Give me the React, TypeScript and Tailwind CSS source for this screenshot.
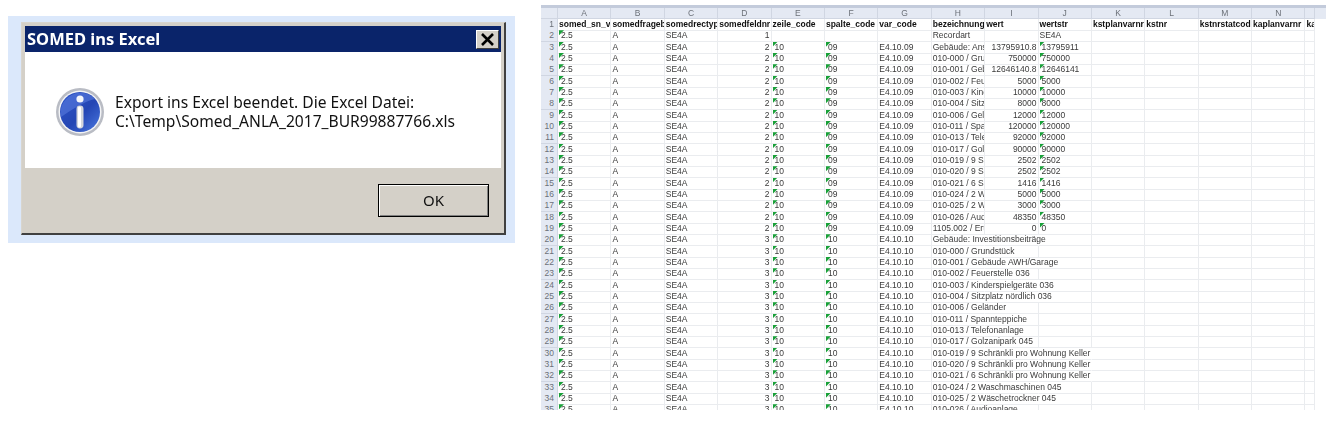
const cols = ["A", "B", "C", "D", "E", "F", "G", "H", "I", "J", "K", "L", "M", "N", ""];

const headers = [
  "somed_sn_version",
  "somedfrageb",
  "somedrectype",
  "somedfeldnr",
  "zeile_code",
  "spalte_code",
  "var_code",
  "bezeichnung",
  "wert",
  "wertstr",
  "kstplanvarnr",
  "kstnr",
  "kstnrstatcode",
  "kaplanvarnr",
  "kaplan",
];

const block1: [string, string][] = [
  ["Gebäude: Anschaffung", "13795910.8"],
  ["010-000 / Grundstück", "750000"],
  ["010-001 / Gebäude", "12646140.8"],
  ["010-002 / Feuerstelle", "5000"],
  ["010-003 / Kinderspiel", "10000"],
  ["010-004 / Sitzplatz", "8000"],
  ["010-006 / Geländer", "12000"],
  ["010-011 / Spannteppiche", "120000"],
  ["010-013 / Telefon", "92000"],
  ["010-017 / Golzanipark", "90000"],
  ["010-019 / 9 Schränkli", "2502"],
  ["010-020 / 9 Schränkli", "2502"],
  ["010-021 / 6 Schränkli", "1416"],
  ["010-024 / 2 Waschmaschinen", "5000"],
  ["010-025 / 2 Wäschetrockner", "3000"],
  ["010-026 / Audioanlage", "48350"],
  ["1105.002 / Ertrag", "0"],
];

const block2 = [
  "Gebäude: Investitionsbeiträge",
  "010-000 / Grundstück",
  "010-001 / Gebäude AWH/Garage",
  "010-002 / Feuerstelle 036",
  "010-003 / Kinderspielgeräte 036",
  "010-004 / Sitzplatz nördlich 036",
  "010-006 / Geländer",
  "010-011 / Spannteppiche",
  "010-013 / Telefonanlage",
  "010-017 / Golzanipark 045",
  "010-019 / 9 Schränkli pro Wohnung Keller",
  "010-020 / 9 Schränkli pro Wohnung Keller",
  "010-021 / 6 Schränkli pro Wohnung Keller",
  "010-024 / 2 Waschmaschinen 045",
  "010-025 / 2 Wäschetrockner 045",
  "010-026 / Audioanlage",
];

function InfoIcon() {
  return (
    <svg width="50" height="50" viewBox="0 0 50 50" className="shrink-0">
      <defs>
        <linearGradient id="infoBlue" x1="0" y1="0" x2="1" y2="1">
          <stop offset="0" stopColor="#2f55c8" />
          <stop offset="0.55" stopColor="#2446b4" />
          <stop offset="1" stopColor="#4a78e0" />
        </linearGradient>
      </defs>
      <circle cx="25" cy="25" r="24" fill="#b9bcc4" />
      <circle cx="25" cy="25" r="21.5" fill="#f2f3f5" />
      <circle cx="25" cy="25" r="20" fill="url(#infoBlue)" />
      <path d="M6 30 A20 20 0 0 1 40 12 C30 14 18 22 6 30Z" fill="#5c7fe0" opacity="0.55" />
      <circle cx="25" cy="12" r="3.6" fill="#f4f6fb" />
      <rect x="21.5" y="18.5" width="7" height="23" rx="3.4" fill="#d3d6dc" />
      <rect x="23" y="19.5" width="3" height="21" rx="1.5" fill="#ffffff" />
    </svg>
  );
}

function Dialog() {
  return (
    <div className="w-[507px] h-[227px] bg-[#dbe8fb] pt-[6px] pl-[13px]">
      <div className="w-[485px] h-[213px] flex flex-col bg-[#d4d0c8] border-t-[1px] border-l-[1px] border-t-[#d8d5ce] border-l-[#d8d5ce] border-r-[2px] border-b-[2px] border-r-[#404040] border-b-[#404040] p-[3px] blur-[0.4px] font-['Noto_Sans',sans-serif]">
        <div className="h-[26px] shrink-0 bg-[#0a246a] flex items-center justify-between pl-[2px] pr-[2px]">
          <span className="text-white font-bold text-[16.5px] leading-none">SOMED ins Excel</span>
          <button className="w-[23px] h-[19px] flex items-center justify-center bg-[#d4d0c8] border border-t-white border-l-white border-r-[#404040] border-b-[#404040]">
            <svg width="15" height="13" viewBox="0 0 15 13">
              <path d="M2 1 L13 12 M13 1 L2 12" stroke="#000" strokeWidth="2.6" fill="none" />
            </svg>
          </button>
        </div>
        <div className="h-[116px] shrink-0 bg-white flex items-center pl-[30px] pt-[3px] gap-[10px]">
          <InfoIcon />
          <p className="text-[15.6px] leading-[19px] text-[#111] whitespace-nowrap">
            Export ins Excel beendet. Die Excel Datei:
            <br />
            C:\Temp\Somed_ANLA_2017_BUR99887766.xls
          </p>
        </div>
        <div className="flex-1 flex justify-end pt-[16px] pr-[12px]">
          <button className="w-[111px] h-[33px] bg-[#d4d0c8] border border-black text-[15px] text-[#111] shadow-[inset_1px_1px_0_#fff,inset_-1px_-1px_0_#808080]">
            OK
          </button>
        </div>
      </div>
    </div>
  );
}

function Flag() {
  return (
    <span className="absolute left-[1px] top-0 w-[5px] h-[5px] bg-[#18a038] [clip-path:polygon(0_0,100%_0,0_100%)]" />
  );
}

function Cell({
  children,
  flag,
  right,
  clip,
  open,
}: {
  children?: React.ReactNode;
  flag?: boolean;
  right?: boolean;
  clip?: boolean;
  open?: boolean;
}) {
  return (
    <div
      className={`relative h-full border-r border-b border-[#eaecef] px-[1px] whitespace-nowrap ${
        right ? "text-right" : ""
      } ${clip ? "overflow-hidden" : ""} ${open ? "border-r-transparent" : ""}`}
    >
      {flag && <Flag />}
      {children}
    </div>
  );
}

function Row({ n, children }: { n: number; children: React.ReactNode }) {
  return (
    <div className="grid grid-cols-[17px_repeat(14,53.4px)_10px] h-[11.34px] leading-[11px]">
      <div className="h-full bg-[#e4e9f3] border-r border-b border-[#d0d6e2] text-right pr-[3px] text-[#6b7078]">
        {n}
      </div>
      {children}
    </div>
  );
}

function Sheet() {
  const rows: React.ReactNode[] = [];

  for (let n = 2; n <= 35; n++) {
    const first = block1[n - 3];
    const second = block2[n - 20];
    const code = n <= 19 ? "09" : "10";
    const hasCode = n > 2;
    const d = n === 2 ? "1" : n <= 19 ? "2" : "3";
    const len = second ? second.length : 0;

    rows.push(
      <Row key={n} n={n}>
        <Cell flag>
          <span className="pl-[2px]">2.5</span>
        </Cell>
        <Cell>A</Cell>
        <Cell>SE4A</Cell>
        <Cell right>{d}</Cell>
        <Cell flag={hasCode}>{hasCode ? <span className="pl-[2px]">10</span> : null}</Cell>
        <Cell flag={hasCode}>{hasCode ? <span className="pl-[2px]">{code}</span> : null}</Cell>
        <Cell>{hasCode ? `E4.10.${code}` : null}</Cell>
        <Cell clip={!!first} open={len > 12}>
          {n === 2 ? "Recordart" : first ? first[0] : second}
        </Cell>
        <Cell right open={len >= 28}>
          {first ? first[1] : null}
        </Cell>
        <Cell flag={!!first} open={len >= 40}>
          {n === 2 ? (
            "SE4A"
          ) : first ? (
            <span className="pl-[2px]">{String(Math.round(Number(first[1])))}</span>
          ) : null}
        </Cell>
        <Cell />
        <Cell />
        <Cell />
        <Cell />
        <Cell />
      </Row>
    );
  }

  return (
    <div className="w-[785px] h-[405px] overflow-hidden font-['Liberation_Sans',sans-serif] text-[8.5px] text-[#3a3a3a] blur-[0.45px]">
      <div className="h-[3px] bg-[#c3cbdb]" />
      <div className="grid grid-cols-[17px_repeat(14,53.4px)_10px] h-[11px] leading-[10px] text-center text-[#6b7078] bg-[#e4e9f3]">
        <div className="border-r border-b border-[#d0d6e2]" />
        {cols.map((c) => (
          <div key={c} className="border-r border-b border-[#d0d6e2]">
            {c}
          </div>
        ))}
      </div>
      <Row n={1}>
        {headers.map((h) => (
          <div
            key={h}
            className="h-full border-r border-b border-[#eaecef] px-[1px] font-bold text-[#111] whitespace-nowrap overflow-hidden"
          >
            {h}
          </div>
        ))}
      </Row>
      {rows}
    </div>
  );
}

export default function App() {
  return (
    <div className="w-[1326px] h-[423px] bg-white flex overflow-hidden">
      <div className="pt-[16px] pl-[8px]">
        <Dialog />
      </div>
      <div className="pt-[5px] pl-[26px]">
        <Sheet />
      </div>
    </div>
  );
}
